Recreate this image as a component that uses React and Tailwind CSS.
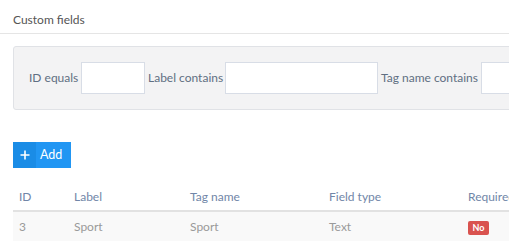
export default function App() {
  const columns = [
    { key: 'id', label: 'ID', w: 'w-[55px]' },
    { key: 'label', label: 'Label', w: 'w-[116px]' },
    { key: 'tag', label: 'Tag name', w: 'w-[139px]' },
    { key: 'type', label: 'Field type', w: 'w-[139px]' },
    { key: 'req', label: 'Required', w: 'w-[80px]' },
  ]

  return (
    <div className="w-[509px] h-[241px] overflow-hidden bg-white font-['Lato',sans-serif] text-[12px]">
      {/* Header */}
      <div className="h-[34px] border-b border-[#e5e5e5] px-[13px] pt-[11px] text-[#555]">
        Custom fields
      </div>

      <div className="pl-[13px]">
        {/* Filters */}
        <div className="mt-[12px] h-[64px] w-[520px] rounded-[3px] border border-[#e0e2e6] bg-[#f3f3f4] flex items-center pl-[15px] whitespace-nowrap text-[#5f6f82]">
          <span className="w-[52px] shrink-0">ID equals</span>
          <div className="h-[32px] w-[64px] shrink-0 border border-[#d8dde6] bg-white" />
          <span className="ml-[3px] w-[77px] shrink-0">Label contains</span>
          <div className="h-[32px] w-[153px] shrink-0 border border-[#d8dde6] bg-white" />
          <span className="ml-[3px] w-[100px] shrink-0">Tag name contains</span>
          <div className="h-[32px] w-[64px] shrink-0 border border-[#d8dde6] bg-white" />
        </div>

        {/* Add */}
        <button className="mt-[32px] flex h-[26px] w-[58px] items-stretch bg-[#2196f3] text-white text-[12.5px]">
          <span className="flex w-[23px] items-center justify-center bg-[#1a8ce6]">
            <svg width="10" height="10" viewBox="0 0 10 10" className="block">
              <path d="M5 0.5v9M0.5 5h9" stroke="white" strokeWidth="1.6" />
            </svg>
          </span>
          <span className="flex items-center pl-[4px]">Add</span>
        </button>

        {/* Table */}
        <div className="mt-[16px] w-[520px] whitespace-nowrap">
          <div className="flex h-[28px] items-center border-b-2 border-[#e2e2e2] text-[#7186a8]">
            {columns.map(c => (
              <div key={c.key} className={`${c.w} shrink-0 pl-[6px]`}>{c.label}</div>
            ))}
          </div>
          <div className="flex h-[29px] items-center bg-[#f9f9f9] pt-[1px] text-[#9a9a9a]">
            <div className="w-[55px] shrink-0 pl-[6px]">3</div>
            <div className="w-[116px] shrink-0 pl-[6px]">Sport</div>
            <div className="w-[139px] shrink-0 pl-[6px]">Sport</div>
            <div className="w-[139px] shrink-0 pl-[6px]">Text</div>
            <div className="w-[80px] shrink-0 pl-[6px]">
              <span className="inline-flex h-[14px] w-[21px] items-center justify-center rounded-[2px] bg-[#d9534f] text-[9px] font-bold text-white">No</span>
            </div>
          </div>
        </div>
      </div>
    </div>
  )
}
